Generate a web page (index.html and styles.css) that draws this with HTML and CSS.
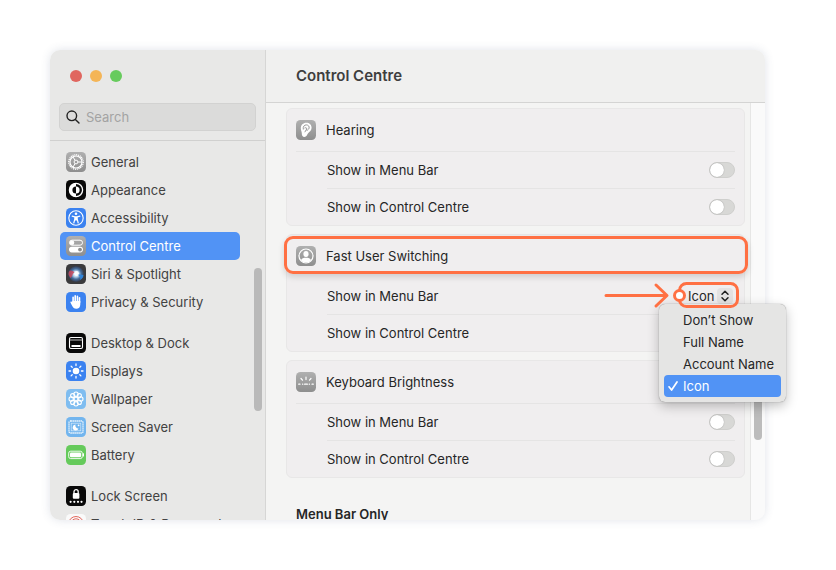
FILE: index.html
```
<!DOCTYPE html>
<html lang="en-GB">
<head>
    <meta charset="UTF-8">
    <meta name="viewport" content="width=device-width, initial-scale=1.0">
    <title>Control Centre</title>
    <link rel="stylesheet" href="styles.css">
</head>
<body>
    <div class="stage">
        <div class="window">
            <aside class="sidebar">
                <div class="sidebar-top">
                    <div class="lights">
                        <button class="light red" aria-label="Close"></button>
                        <button class="light yellow" aria-label="Minimise"></button>
                        <button class="light green" aria-label="Zoom"></button>
                    </div>
                    <label class="search">
                        <svg width="14" height="14" viewBox="0 0 14 14" fill="none" stroke="#222" stroke-width="1.4" stroke-linecap="round"><circle cx="5.8" cy="5.8" r="4.8"/><path d="M9.4 9.4L13 13"/></svg>
                        <input type="search" placeholder="Search" aria-label="Search">
                    </label>
                </div>
                <nav class="menu">
                    <div class="menu-group">
                        <a href="#" class="item">
                            <svg class="icon" viewBox="0 0 20 20">
                                <defs><linearGradient id="gray" x1="0" y1="0" x2="0" y2="1"><stop offset="0" stop-color="#b0b0b0"/><stop offset="1" stop-color="#8e8e8e"/></linearGradient></defs>
                                <rect width="20" height="20" rx="4.500" fill="url(#gray)"/><g fill="none" stroke="#fff"><circle cx="10" cy="10" r="7.200" stroke-width="1.400" stroke-dasharray="1.100 .78"/><circle cx="10" cy="10" r="6" stroke-width="1.100"/><circle cx="10" cy="10" r="1.900"/><path d="M11.900 10H16M9 8.300L7 4.900M9 11.700L7 15.100"/></g>
                            </svg>
                            General
                        </a>
                        <a href="#" class="item">
                            <svg class="icon" viewBox="0 0 20 20"><rect width="20" height="20" rx="4.500" fill="#090909"/><circle cx="10" cy="10" r="6.600" fill="none" stroke="#fff" stroke-width="1.300"/><path d="M10 3.400a6.600 6.600 0 0 0 0 13.200v-3a3.600 3.600 0 0 1 0-7.200z" fill="#fff"/><path d="M10 6.400a3.600 3.600 0 0 1 0 7.200z" fill="#fff"/></svg>
                            Appearance
                        </a>
                        <a href="#" class="item">
                            <svg class="icon" viewBox="0 0 20 20"><rect width="20" height="20" rx="4.500" fill="#3b82f0"/><circle cx="10" cy="10" r="7.200" fill="none" stroke="#fff" stroke-width="1.100"/><circle cx="10" cy="5.800" r="1.300" fill="#fff"/><path d="M6.200 8.200l2.600.6v2.400L7.800 15M13.800 8.200l-2.600.6v2.400l1 3.800M8.800 8.800h2.400M9.500 9v3h1V9" fill="none" stroke="#fff" stroke-width="1.200" stroke-linecap="round" stroke-linejoin="round"/></svg>
                            Accessibility
                        </a>
                        <a href="#" class="item active" aria-current="page">
                            <svg class="icon" viewBox="0 0 20 20"><rect width="20" height="20" rx="4.500" fill="url(#gray)"/><rect x="3.500" y="4.200" width="13" height="5" rx="2.500" fill="none" stroke="#fff"/><circle cx="6" cy="6.700" r="2.300" fill="#fff"/><rect x="3" y="10.800" width="14" height="5.600" rx="2.800" fill="#fff"/><circle cx="14" cy="13.600" r="1.900" fill="#8c8c8c"/></svg>
                            Control Centre
                        </a>
                        <a href="#" class="item">
                            <svg class="icon" viewBox="0 0 20 20">
                                <defs><radialGradient id="siri"><stop offset="0" stop-color="#fff"/><stop offset=".35" stop-color="#b9d3ea"/><stop offset=".65" stop-color="#456f9f"/><stop offset="1" stop-color="#34394a"/></radialGradient></defs>
                                <rect width="20" height="20" rx="4.500" fill="#3a3a3c"/><circle cx="10" cy="10" r="8" fill="url(#siri)"/><path d="M2.600 11C2 6 5 5 9 8.500c-3 .2-2 4-4.500 5.500z" fill="#c9495c" opacity=".85"/><path d="M10 10c3 1 5 3 4 6 2-1 3.500-3 3.500-5z" fill="#2e83d8"/><circle cx="10.500" cy="9.500" r="2.400" fill="#fff" opacity=".9"/>
                            </svg>
                            Siri &amp; Spotlight
                        </a>
                        <a href="#" class="item">
                            <svg class="icon" viewBox="0 0 20 20"><rect width="20" height="20" rx="4.500" fill="#3b82f0"/><path d="M7.100 10.500V5.200M9.200 9.500V3.900M11.400 9.500V4.200M13.500 10.500V5.800" stroke="#fff" stroke-width="1.600" stroke-linecap="round"/><path d="M6.300 9h8v3.200c0 3-1.600 4.600-4 4.600-2.200 0-3.200-1-4.200-3L4.500 10.700c-.4-1 .8-1.500 1.400-.7l.4.600z" fill="#fff"/></svg>
                            Privacy &amp; Security
                        </a>
                    </div>
                    <div class="menu-group">
                        <a href="#" class="item">
                            <svg class="icon" viewBox="0 0 20 20"><rect width="20" height="20" rx="4.500" fill="#090909"/><rect x="3.500" y="4.500" width="13" height="11" rx="1.500" fill="none" stroke="#fff" stroke-width="1.100"/><path d="M3.500 7h13" stroke="#bbb"/><path d="M5.500 12h9v2h-9z" fill="#fff"/></svg>
                            Desktop &amp; Dock
                        </a>
                        <a href="#" class="item">
                            <svg class="icon" viewBox="0 0 20 20"><rect width="20" height="20" rx="4.500" fill="#3b82f0"/><circle cx="10" cy="10" r="3.300" fill="#fff"/><path d="M10 3v1.600M10 15.400V17M3 10h1.600M15.400 10H17M5.100 5.100l1.100 1.100M13.800 13.800l1.100 1.100M5.100 14.900l1.100-1.100M13.800 6.200l1.100-1.100" stroke="#fff" stroke-width="1.300" stroke-linecap="round"/></svg>
                            Displays
                        </a>
                        <a href="#" class="item">
                            <svg class="icon" viewBox="0 0 20 20"><rect width="20" height="20" rx="4.500" fill="#7fbdf0"/><g fill="none" stroke="#fff" stroke-width="1.100"><circle cx="10" cy="10" r="1.900"/><circle cx="10" cy="5.200" r="2.200"/><circle cx="10" cy="14.800" r="2.200"/><circle cx="5.200" cy="10" r="2.200"/><circle cx="14.800" cy="10" r="2.200"/><circle cx="6.600" cy="6.600" r="2"/><circle cx="13.400" cy="6.600" r="2"/><circle cx="6.600" cy="13.400" r="2"/><circle cx="13.400" cy="13.400" r="2"/></g></svg>
                            Wallpaper
                        </a>
                        <a href="#" class="item">
                            <svg class="icon" viewBox="0 0 20 20"><rect width="20" height="20" rx="4.500" fill="#72b5ee"/><rect x="3" y="4" width="14" height="12" rx="1.500" fill="none" stroke="#fff" stroke-width="1.300" stroke-dasharray="1.300 .7"/><rect x="5.200" y="6.200" width="9.600" height="7.600" fill="none" stroke="#fff" stroke-width=".7" opacity=".7"/><path d="M9.500 7.500a3 3 0 1 0 3 4 3 3 0 0 1-3-4z" fill="#fff"/><circle cx="12.600" cy="8.300" r=".9" fill="#fff"/></svg>
                            Screen Saver
                        </a>
                        <a href="#" class="item">
                            <svg class="icon" viewBox="0 0 20 20"><rect width="20" height="20" rx="4.500" fill="#65ca5b"/><rect x="2.700" y="6.200" width="13.600" height="7.400" rx="2" fill="none" stroke="#fff" stroke-width=".9"/><rect x="4" y="7.500" width="11" height="4.800" rx="1" fill="#fff"/><path d="M17.500 8.700v2.400" stroke="#fff" stroke-linecap="round"/></svg>
                            Battery
                        </a>
                    </div>
                    <div class="menu-group">
                        <a href="#" class="item">
                            <svg class="icon" viewBox="0 0 20 20"><rect width="20" height="20" rx="4.500" fill="#090909"/><rect x="6.800" y="7" width="6.600" height="5.800" rx="1" fill="#fff"/><path d="M8 7.500V5.800a2.100 2.100 0 0 1 4.200 0v1.700" fill="none" stroke="#fff" stroke-width="1.300"/><path d="M4.600 15.800h.01M8.300 15.800h.01M12 15.800h.01M15.500 15.800h.01" stroke="#fff" stroke-width="2.200" stroke-linecap="round"/></svg>
                            Lock Screen
                        </a>
                        <a href="#" class="item">
                            <svg class="icon" viewBox="0 0 20 20"><rect width="20" height="20" rx="4.500" fill="#fafafa"/><g fill="none" stroke="#e2685f"><circle cx="10" cy="10" r="7.500"/><circle cx="10" cy="10" r="5.200"/><circle cx="10" cy="10" r="3"/></g></svg>
                            Touch ID &amp; Password
                        </a>
                    </div>
                </nav>
                <div class="thumb"></div>
            </aside>

            <main class="main">
                <header class="title-bar">
                    <h1>Control Centre</h1>
                </header>
                <div class="scroll">
                    <div class="content">
                        <section class="card">
                            <div class="card-head">
                                <svg class="icon" viewBox="0 0 20 20"><rect width="20" height="20" rx="4.500" fill="url(#gray)"/><path d="M10.300 2.800c-3.200 0-5.500 2.300-5.500 5.400 0 2.300 1 3.400 1 5.400 0 2.100.9 3.400 2.600 3.400 2.300 0 2.400-2.200 3.700-3.700 1.500-1.600 3.500-2.900 3.500-5.500 0-3-2.200-5-5.300-5z" fill="#fff"/><path d="M7.300 9.500c-.5-3 1-4.600 3-4.600s3.200 1.500 2.800 3.300c-.4 1.500-1.900 1.300-2.200 2.600M8.500 8c2-1 3 .7 1.600 2-.9.800-.5 1.500-1.300 2.200" fill="none" stroke="#999" stroke-width="1"/></svg>
                                <h2>Hearing</h2>
                            </div>
                            <label class="row">Show in Menu Bar <input type="checkbox" class="toggle"></label>
                            <label class="row">Show in Control Centre <input type="checkbox" class="toggle"></label>
                        </section>

                        <section class="card">
                            <div class="card-head marked">
                                <svg class="icon" viewBox="0 0 20 20"><rect width="20" height="20" rx="4.500" fill="url(#gray)"/><circle cx="10" cy="10" r="7" fill="none" stroke="#fff" stroke-width="1.200"/><ellipse cx="10" cy="8" rx="2.600" ry="3" fill="#fff"/><path d="M5 14.300c.6-2 2.600-2.600 5-2.600s4.400.6 5 2.600C13.700 15.800 12 16.500 10 16.500s-3.700-.7-5-2.200z" fill="#fff"/></svg>
                                <h2>Fast User Switching</h2>
                            </div>
                            <div class="row">
                                <label for="userMenu">Show in Menu Bar</label>
                                <span class="picker">
                                    <select id="userMenu">
                                        <option>Don’t Show</option>
                                        <option>Full Name</option>
                                        <option>Account Name</option>
                                        <option selected>Icon</option>
                                    </select>
                                    <svg width="16" height="16" viewBox="0 0 16 16" fill="none" stroke="#222" stroke-width="1.500" stroke-linecap="round" stroke-linejoin="round"><path d="M5 6.200l3-3 3 3M5 9.800l3 3 3-3"/></svg>
                                </span>
                            </div>
                            <label class="row">Show in Control Centre <input type="checkbox" class="toggle"></label>
                        </section>

                        <section class="card">
                            <div class="card-head">
                                <svg class="icon" viewBox="0 0 20 20"><rect width="20" height="20" rx="4.500" fill="url(#gray)"/><path d="M10 5v2.600M5 6.500l1.500 1.700M15 6.500l-1.500 1.700M2.700 12.200h1.300M6.500 12.200h.3M8.600 12.200h2.800M13.200 12.200h.3M16 12.200h1.300" stroke="#fff" stroke-width="1.200" stroke-linecap="round"/></svg>
                                <h2>Keyboard Brightness</h2>
                            </div>
                            <label class="row">Show in Menu Bar <input type="checkbox" class="toggle"></label>
                            <label class="row">Show in Control Centre <input type="checkbox" class="toggle"></label>
                        </section>

                        <h2 class="section-title">Menu Bar Only</h2>
                    </div>
                    <div class="track">
                        <div class="track-thumb"></div>
                    </div>
                </div>
            </main>
        </div>

        <div class="popup" role="listbox" aria-label="Show in Menu Bar">
            <button class="option" role="option">Don’t Show</button>
            <button class="option" role="option">Full Name</button>
            <button class="option" role="option">Account Name</button>
            <button class="option chosen" role="option" aria-selected="true">
                <svg width="10" height="10" viewBox="0 0 10 10" fill="none" stroke="#fff" stroke-width="1.700" stroke-linecap="round" stroke-linejoin="round"><path d="M1 5.800L3.600 9 9 1"/></svg>
                Icon
            </button>
        </div>
        <svg class="pointer" width="138" height="32" viewBox="0 0 138 32" fill="none" stroke="#ff7043" stroke-width="3" stroke-linecap="round" stroke-linejoin="round">
            <path d="M3 16.500H63M53 6L64 16.500L53 27"/>
            <rect x="76.500" y="4.500" width="58" height="23" rx="7"/>
            <circle cx="76.500" cy="16.500" r="5" fill="#fff"/>
        </svg>
    </div>
</body>
</html>
```
FILE: styles.css
```
* {
    box-sizing: border-box;
}

body {
    margin: 0;
    background-color: #fff;
    font-family: Inter, "Liberation Sans", sans-serif;
    font-size: 13px;
    color: #262626;
}

button, input, select {
    font: inherit;
    color: inherit;
    border: none;
    margin: 0;
    padding: 0;
    background: none;
}

.stage {
    position: relative;
    height: calc(100vh - 100px);
    margin: 50px 71px 50px 50px;
}

.window {
    display: flex;
    height: 100%;
    border-radius: 10px;
    overflow: hidden;
    box-shadow: 0 0 10px rgba(60, 80, 120, 0.16);
}

/* sidebar */
.sidebar {
    position: relative;
    flex: none;
    width: 216px;
    background-color: #e8e8e7;
    border-right: 1px solid #d6d6d5;
    overflow: hidden;
    color: #424242;
}

.sidebar-top {
    padding: 20px 9px 9px;
    border-bottom: 1px solid #d0d0cf;
}

.lights {
    display: flex;
    gap: 8px;
    padding-left: 11px;
    margin-bottom: 21px;
}

.light {
    width: 12px;
    height: 12px;
    border-radius: 50%;
}

.red {
    background-color: #e0665f;
}

.yellow {
    background-color: #f4b557;
}

.green {
    background-color: #67cb5d;
}

.search {
    display: flex;
    align-items: center;
    gap: 6px;
    height: 28px;
    padding: 0 6px;
    border: 1px solid #d2d2d1;
    border-radius: 5px;
    background-color: #dbdbda;
}

.search input {
    flex: 1;
    min-width: 0;
    outline: none;
}

.search input::placeholder {
    color: #a3a3a3;
    opacity: 1;
}

.menu {
    display: flex;
    flex-direction: column;
    gap: 13px;
    padding: 7px 25px 0 10px;
}

.item {
    display: flex;
    align-items: center;
    gap: 5px;
    height: 28px;
    padding-left: 6px;
    border-radius: 5px;
    color: inherit;
    text-decoration: none;
    white-space: nowrap;
}

.item.active {
    background-color: #5193f5;
    color: #fff;
}

.icon {
    flex: none;
    width: 20px;
    height: 20px;
}

.thumb {
    position: absolute;
    top: 218px;
    right: 3px;
    width: 8px;
    height: 143px;
    border-radius: 4px;
    background-color: #b9b9b9;
}

/* main part */
.main {
    flex: 1;
    min-width: 0;
    display: flex;
    flex-direction: column;
    background-color: #f4f4f3;
}

.title-bar {
    flex: none;
    display: flex;
    align-items: center;
    height: 53px;
    padding: 0 30px 2px;
    background-color: #f0f0ef;
    border-bottom: 1px solid #d4d4d3;
}

h1, h2 {
    margin: 0;
    font-size: 13px;
    font-weight: 400;
}

.title-bar h1 {
    font-size: 15px;
    font-weight: 600;
    color: #3e3e3e;
}

.scroll {
    flex: 1;
    min-height: 0;
    display: flex;
    overflow: hidden;
}

.content {
    flex: 1;
    display: flex;
    flex-direction: column;
    gap: 8px;
    padding: 5px 5px 0 20px;
}

.card {
    flex: none;
    border: 1px solid #e8e7e7;
    border-radius: 6px;
    background-color: #f0eeef;
    padding: 0 9px;
}

.card-head {
    position: relative;
    display: flex;
    align-items: center;
    gap: 10px;
    height: 42px;
}

.marked::after {
    content: "";
    position: absolute;
    inset: 1px -13px 3px -12px;
    border: 3px solid #ff7043;
    border-radius: 9px;
    box-shadow: 0 3px 6px rgba(0, 0, 0, 0.14);
}

.row {
    display: flex;
    align-items: center;
    justify-content: space-between;
    height: 37px;
    margin-left: 31px;
    border-top: 1px solid #e5e4e4;
}

.card-head + .row {
    margin-left: 0;
    padding-left: 31px;
}

.marked + .row {
    border-top-color: transparent;
}

.toggle {
    appearance: none;
    width: 26px;
    height: 16px;
    border: 1px solid #cfcfcd;
    border-radius: 8px;
    background-color: #d8d8d6;
}

.toggle::before {
    content: "";
    display: block;
    width: 14px;
    height: 14px;
    border-radius: 50%;
    background-color: #fff;
    box-shadow: 0 0 1px rgba(0, 0, 0, 0.4);
}

.picker {
    display: flex;
    align-items: center;
    gap: 2px;
    padding-right: 2px;
}

.picker select {
    appearance: none;
    width: 27px;
    outline: none;
}

.picker svg {
    border-radius: 4px;
    background-color: #e3e2e2;
}

.section-title {
    padding: 20px 10px 0;
    font-weight: 600;
}

.track {
    flex: none;
    width: 15px;
    padding: 207px 3px 0;
    background-color: #fafafa;
    border-left: 1px solid #e6e6e5;
}

.track-thumb {
    height: 130px;
    border-radius: 4px;
    background-color: #bcbcbc;
}

/* opened list */
.popup {
    position: absolute;
    top: 254px;
    right: -21px;
    width: 127px;
    padding: 5px;
    border-radius: 6px;
    background-color: #e5e5e4;
    box-shadow: 0 0 1px rgba(0, 0, 0, 0.5), 0 4px 12px rgba(0, 0, 0, 0.25);
}

.option {
    display: flex;
    align-items: center;
    gap: 5px;
    width: 100%;
    height: 22px;
    padding-left: 19px;
    border-radius: 4px;
    white-space: nowrap;
}

.option.chosen {
    padding-left: 4px;
    background-color: #5193f5;
    color: #fff;
}

.pointer {
    position: absolute;
    top: 229px;
    right: 24px;
}
```
